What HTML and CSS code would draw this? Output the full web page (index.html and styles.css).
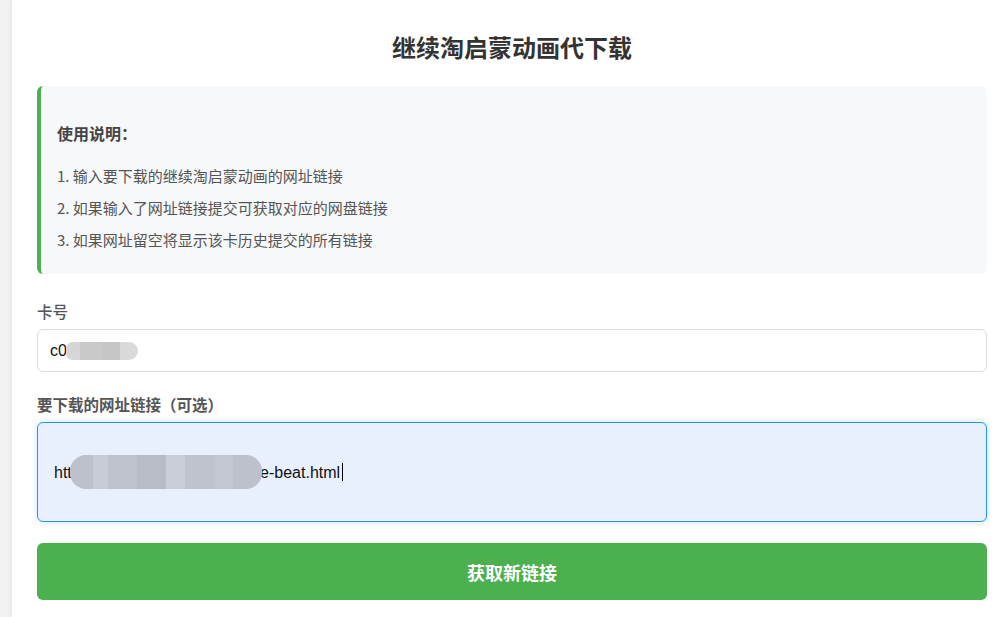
FILE: index.html
```html
<!DOCTYPE html>
<html lang="zh-CN">
<head>
<meta charset="utf-8">
<title>继续淘启蒙动画代下载</title>
<link rel="stylesheet" href="styles.css">
</head>
<body>
<div class="container">
  <h1 class="title">继续淘启蒙动画代下载</h1>
  <div class="info">
    <h3 class="info-title">使用说明：</h3>
    <p class="info-item">1. 输入要下载的继续淘启蒙动画的网址链接</p>
    <p class="info-item">2. 如果输入了网址链接提交可获取对应的网盘链接</p>
    <p class="info-item">3. 如果网址留空将显示该卡历史提交的所有链接</p>
  </div>
  <form class="form">
    <div class="group">
      <label class="label label-normal">卡号</label>
      <div class="field field-card">
        <span class="val">c000</span>
        <span class="blur blur-card"></span>
      </div>
    </div>
    <div class="group">
      <label class="label">要下载的网址链接（可选）</label>
      <div class="field field-url">
        <span class="val">htt<span class="hidden">pxxxxxxxxxxxxxxxxxxxxxxxxxx</span>e-beat.html<span class="caret"></span></span>
        <span class="blur blur-url"></span>
      </div>
    </div>
    <button type="button" class="btn">获取新链接</button>
  </form>
</div>
</body>
</html>
```
FILE: styles.css
```css
html, body {
  margin: 0;
  padding: 0;
  overflow: hidden;
}
body {
  background: #f2f2f2;
  font-family: "Noto Sans CJK SC", "Liberation Sans", sans-serif;
  padding-left: 12px;
  height: 617px;
}
.container {
  width: 950px;
  padding: 0 25px;
  background: #fff;
  box-shadow: 0 0 6px rgba(0,0,0,0.08);
  min-height: 617px;
}
.title {
  margin: 0;
  padding: 31px 0 23px;
  font-size: 24px;
  line-height: 32px;
  font-weight: 700;
  color: #333;
  text-align: center;
}
.info {
  background: #f7f8fa;
  border-left: 4px solid #4caf50;
  border-radius: 6px;
  padding: 35px 16px 23px;
}
.info-title {
  margin: 0 0 20px;
  font-size: 16px;
  line-height: 24px;
  font-weight: 700;
  color: #444;
}
.info-item {
  margin: 0 0 10px;
  font-size: 15px;
  line-height: 22px;
  color: #555;
}
.info-item:last-child { margin-bottom: 0; }
.form {
  padding-top: 26px;
}
.group {
  margin-bottom: 21px;
}
.label {
  display: block;
  font-size: 15.5px;
  line-height: 22px;
  font-weight: 700;
  color: #555;
  margin-bottom: 7px;
}
.label-normal { font-weight: 500; }
.field {
  position: relative;
  box-sizing: border-box;
  display: flex;
  align-items: center;
  font-family: "Liberation Sans", Arial, sans-serif;
  font-size: 16px;
  color: #111;
}
.field-card {
  height: 43px;
  border: 1px solid #ddd;
  border-radius: 6px;
  padding-left: 12px;
}
.field-url {
  height: 100px;
  border: 1px solid #2196f3;
  border-radius: 6px;
  background: #e8f0fe;
  padding-left: 16px;
  box-shadow: 0 0 6px rgba(33,150,243,0.25);
}
.val { white-space: nowrap; }
.hidden { color: transparent; letter-spacing: -1.06px; }
.caret {
  display: inline-block;
  width: 1px;
  height: 18px;
  background: #000;
  vertical-align: -3px;
  margin-left: 2px;
}
.blur {
  position: absolute;
  display: block;
}
.blur-card {
  left: 28px;
  top: 12px;
  width: 72px;
  height: 18px;
  border-radius: 7px 9px 9px 7px;
  background: linear-gradient(90deg, #d6d6d6 0 20%, #c9c9c9 20% 50%, #c6c6c6 50% 75%, #dadada 75% 100%);
}
.blur-url {
  left: 32px;
  top: 32px;
  width: 192px;
  height: 34px;
  border-radius: 16px;
  background: linear-gradient(90deg, #bcc1cc 0 12%, #c8ccd6 12% 20%, #bfc3ce 20% 35%, #b7bcc7 35% 50%, #c9ced8 50% 60%, #bec3ce 60% 75%, #c2c7d2 75% 85%, #bcc1cc 85% 100%);
}
.btn {
  display: block;
  width: 100%;
  height: 57px;
  border: none;
  border-radius: 6px;
  background: #4caf50;
  color: #fff;
  font-family: "Noto Sans CJK SC", sans-serif;
  font-size: 18px;
  font-weight: 700;
  cursor: pointer;
}
```
